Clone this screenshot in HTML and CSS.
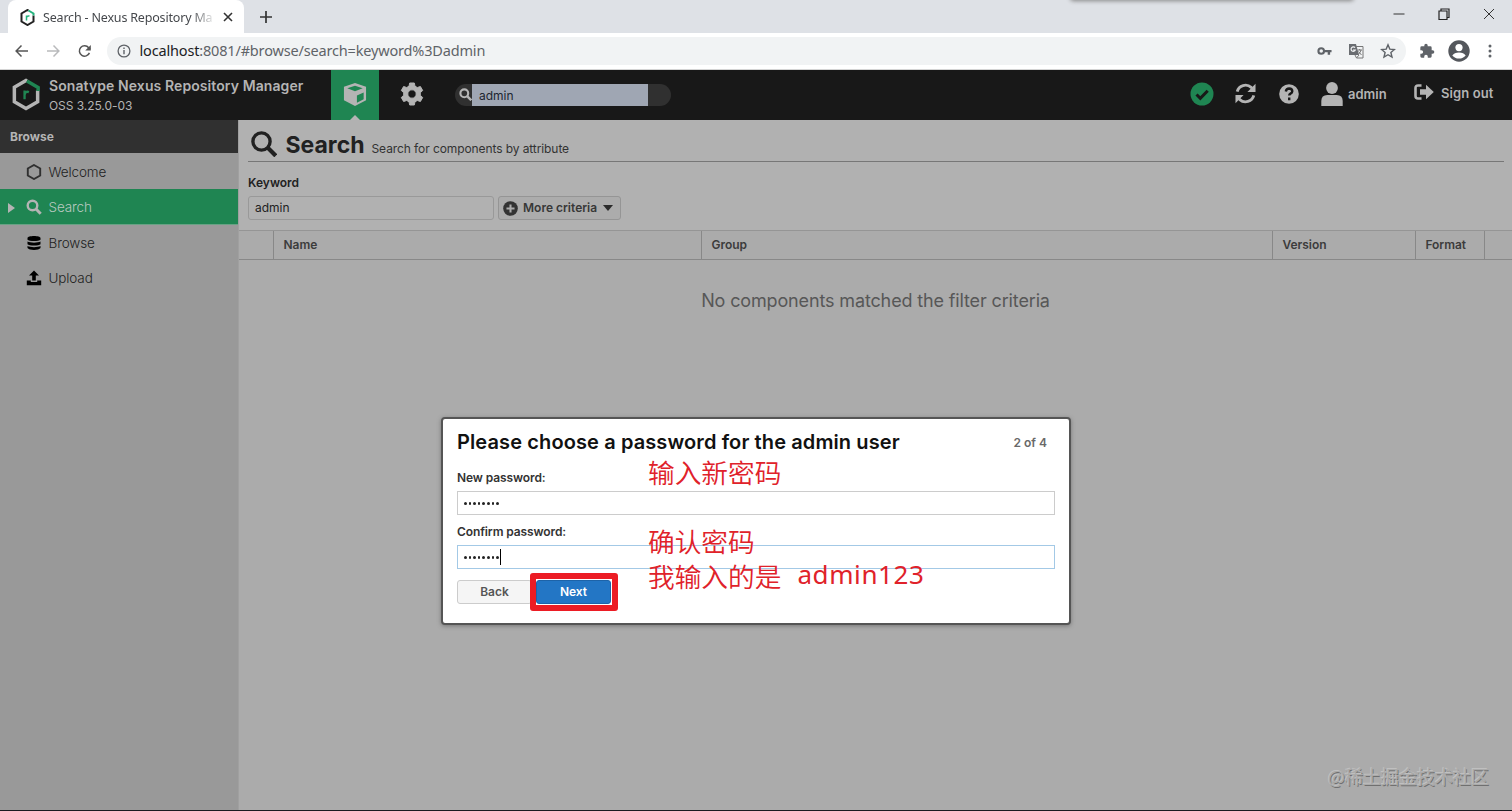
FILE: index.html
```html
<!DOCTYPE html>
<html lang="en">
<head>
<meta charset="utf-8">
<title>Search - Nexus Repository Manager</title>
<link rel="stylesheet" href="styles.css">
</head>
<body>
<div class="window">
  <div class="tabstrip">
    <div class="tab">
      <svg class="favicon" viewBox="0 0 30 34"><path d="M17 3 15 2 3 9v16l12 7 12-7V13" fill="none" stroke="#222" stroke-width="4"/><path d="M17 3l10 6v4" fill="none" stroke="#24b47e" stroke-width="4"/><path d="M13 23V13m0 4q1-4 6-3" fill="none" stroke="#24b47e" stroke-width="3"/></svg>
      <span class="tab-title">Search - Nexus Repository Ma</span>
      <svg class="tab-close" viewBox="0 0 10 10"><path d="M1 1l8 8M9 1L1 9" stroke="#333" stroke-width="1.6"/></svg>
    </div>
    <svg class="tab-new" viewBox="0 0 12 12"><path d="M6 0v12M0 6h12" stroke="#333" stroke-width="1.7"/></svg>
    <div class="shadow-edge"></div>
    <div class="win-controls">
      <svg viewBox="0 0 12 12"><path d="M.5 6h11" stroke="#333"/></svg>
      <svg viewBox="0 0 12 12"><path d="M1 3h8v8.500H1zM3 3V1h8v8.500H9" fill="none" stroke="#222" stroke-width="1.200"/></svg>
      <svg viewBox="0 0 12 12"><path d="M1 1l10 10M11 1L1 11" stroke="#333"/></svg>
    </div>
  </div>
  <div class="toolbar">
    <svg class="nav" viewBox="0 0 14 14"><path d="M14 7H1.500M7 1L1.200 7 7 13" fill="none" stroke="#555" stroke-width="1.600"/></svg>
    <svg class="nav" viewBox="0 0 14 14"><path d="M0 7h12.500M7 1l5.800 6L7 13" fill="none" stroke="#b9babc" stroke-width="1.600"/></svg>
    <svg class="nav" viewBox="0 0 14 14"><path d="M12.300 9A5.600 5.600 0 1 1 11.500 3.500L13 5" fill="none" stroke="#555" stroke-width="1.600"/><path d="M13.800.5v6H7.800z" fill="#555"/></svg>
    <div class="omnibox">
      <svg class="info" viewBox="0 0 14 14"><circle cx="7" cy="7" r="5.900" fill="none" stroke="#5f6368" stroke-width="1.300"/><path d="M7 6v4.300M7 3.500V5" stroke="#5f6368" stroke-width="1.400"/></svg>
      <span class="url"><b>localhost</b>:8081/#browse/search=keyword%3Dadmin</span>
      <svg class="i-key" viewBox="0 0 16 10"><circle cx="4.500" cy="5" r="3" fill="none" stroke="#5f6368" stroke-width="2.200"/><path d="M8 3.800h7.500v2.500H14V9h-2.600V6.300H8z" fill="#5f6368"/></svg>
      <svg class="i-tr" viewBox="0 0 16 16"><path d="M1 1h7l3 11H1z" fill="#6a6d71"/><path d="M8 3.500h7v11.500H8.500L7 12M11 12l-2.500 3" fill="none" stroke="#777" stroke-width="1"/><path d="M7 4.700a2.200 2.200 0 1 0 .3 2.300H5" fill="none" stroke="#f1f3f4" stroke-width="1.200"/><path d="M9.500 7h4.500M11.700 6v1M13 7q-.5 3-3 4.500M10.500 8.500l3 3.500" fill="none" stroke="#777"/></svg>
      <svg class="i-star" viewBox="0 0 16 16"><path d="M8 1.800l1.800 4.300 4.600.4-3.500 3 1.100 4.600L8 11.700l-4 2.400 1.100-4.600-3.500-3 4.600-.4z" fill="none" stroke="#5f6368" stroke-width="1.400"/></svg>
    </div>
    <svg class="i-puzzle" viewBox="0 0 24 24"><path fill="#5f6368" d="M20.500 11H19V7a2 2 0 0 0-2-2h-4V3.500a2.500 2.500 0 0 0-5 0V5H4a2 2 0 0 0-2 2v3.800h1.500a2.700 2.700 0 0 1 0 5.400H2V20a2 2 0 0 0 2 2h3.800v-1.500a2.700 2.700 0 0 1 5.400 0V22H17a2 2 0 0 0 2-2v-4h1.500a2.500 2.500 0 0 0 0-5z"/></svg>
    <svg class="i-profile" viewBox="0 0 22 22"><circle cx="11" cy="11" r="10.700" fill="#54575c"/><circle cx="11" cy="7.600" r="3.600" fill="#fff"/><path d="M4.300 15.500q2-3.100 6.700-3.100t6.700 3.100q-2.500 3.100-6.700 3.100t-6.700-3.100z" fill="#fff"/></svg>
    <svg class="i-dots" viewBox="0 0 4 14"><circle cx="2" cy="2" r="1.500" fill="#5f6368"/><circle cx="2" cy="7" r="1.500" fill="#5f6368"/><circle cx="2" cy="12" r="1.500" fill="#5f6368"/></svg>
  </div>

  <div class="app-header">
    <svg class="logo" viewBox="0 0 30 34"><path d="M16 3 15 2.500 3 9.500v15l12 7 12-7V13" fill="none" stroke="#b4b4b4" stroke-width="3.600"/><path d="M16 3l11.500 6.800v3.500" fill="none" stroke="#1f8552" stroke-width="3.600"/><path d="M13.500 22V13m0 4.500q1-4.500 4.500-3" fill="none" stroke="#1f8552" stroke-width="2.400"/></svg>
    <div class="brand"><div class="brand-name">Sonatype Nexus Repository Manager</div><div class="brand-version">OSS 3.25.0-03</div></div>
    <div class="mode active"><svg viewBox="0 0 26 26"><path d="M13 1l11.500 4v14L13 25 1.500 19V5z" fill="#b4b4b4"/><path d="M13 4l8 2.500L13 9.500 5 6.500zM15 14l7-3v7l-7 3.700z" fill="#1f8552"/></svg></div>
    <div class="mode gear"><svg viewBox="0 0 24 24"><path fill="#b4b4b4" stroke="#b4b4b4" stroke-width="1" stroke-linejoin="round" fill-rule="evenodd" d="M9.700 1h4.600l.7 3.200 2.300 1.300 3.100-1 2.300 4-2.400 2.200v2.600l2.400 2.200-2.300 4-3.100-1-2.300 1.300-.7 3.200H9.700L9 19.800l-2.300-1.300-3.100 1-2.300-4 2.400-2.200v-2.600L1.300 8.500l2.300-4 3.100 1L9 4.200zM12 7.800a4.200 4.200 0 1 0 0 8.400 4.200 4.200 0 0 0 0-8.400z"/></svg></div>
    <div class="quick-search">
      <svg viewBox="0 0 14 14"><circle cx="5.700" cy="5.700" r="4.200" fill="none" stroke="#b4b4b4" stroke-width="2.300"/><path d="M8.800 8.800l4.400 4.400" stroke="#b4b4b4" stroke-width="2.700"/></svg>
      <div class="quick-input">admin</div>
    </div>
    <div class="header-actions">
      <svg class="a-check" viewBox="0 0 24 24"><circle cx="12" cy="12" r="11.500" fill="#1f8552"/><path d="M6.500 12.500l3.800 3.800 7.400-7.600" fill="none" stroke="#181818" stroke-width="3"/></svg>
      <svg class="a-refresh" viewBox="0 0 22 22"><path d="M2.300 9A9 9 0 0 1 17 4.600L19 7M19.700 13A9 9 0 0 1 5 17.400L3 15" fill="none" stroke="#b4b4b4" stroke-width="3"/><path d="M21.500.8v8.500H13zM.5 21.200v-8.500H9z" fill="#b4b4b4"/></svg>
      <svg class="a-help" viewBox="0 0 20 20"><circle cx="10" cy="10" r="9.800" fill="#b4b4b4"/><path d="M6.800 7.500q.5-3 3.400-3 3 .1 3.100 2.700 0 1.500-1.800 2.400-1.300.7-1.300 2M10.200 13.600v2.600" fill="none" stroke="#181818" stroke-width="2.400"/></svg>
      <svg class="a-user" viewBox="0 0 22 24"><circle cx="11" cy="6" r="5.900" fill="#b4b4b4"/><path d="M.3 24v-5q0-6 6-6h9.400q6 0 6 6v5z" fill="#b4b4b4"/></svg>
      <span class="a-name">admin</span>
      <svg class="a-out" viewBox="0 0 20 16"><path d="M7.500 1.500H4Q1.500 1.500 1.500 4v8q0 2.500 2.500 2.500h3.500" fill="none" stroke="#b4b4b4" stroke-width="2.600"/><path d="M6 5.300h6V.8L19.800 8 12 15.200v-4.500H6z" fill="#b4b4b4"/></svg>
      <span class="a-signout">Sign out</span>
    </div>
  </div>

  <div class="body">
    <div class="sidebar">
      <div class="side-title">Browse</div>
      <div class="side-item welcome"><svg viewBox="0 0 16 16"><path d="M8 1l6.200 3.500v7L8 15l-6.200-3.500v-7z" fill="none" stroke="#303030" stroke-width="1.900"/></svg><span>Welcome</span></div>
      <div class="side-item selected"><i class="caret"></i><svg viewBox="0 0 16 16"><circle cx="6.500" cy="6.500" r="4.800" fill="none" stroke="#b4b4b4" stroke-width="2.400"/><path d="M10 10l4.700 4.700" stroke="#b4b4b4" stroke-width="3"/></svg><span>Search</span></div>
      <div class="side-item"><svg viewBox="0 0 16 16"><path d="M1.500 3.200C1.500.4 14.500.4 14.500 3.200v1.500C13 6.500 3 6.500 1.500 4.700zM1.500 6.500C4 8 12 8 14.500 6.500v2.700C13 11 3 11 1.500 9.200zM1.500 11C4 12.500 12 12.500 14.500 11v2c-1.500 2.600-11.500 2.600-13 0z"/></svg><span>Browse</span></div>
      <div class="side-item"><svg viewBox="0 0 16 16"><path d="M8 .5l5 5H9.800v5H6.200v-5H3zM.8 10.500h4v1.500h6.400v-1.500h4v4.700H.8z"/></svg><span>Upload</span></div>
    </div>
    <div class="content">
      <div class="page-head">
        <svg viewBox="0 0 26 26"><circle cx="10.500" cy="10.500" r="8.600" fill="none" stroke="#212121" stroke-width="3.400"/><path d="M16.800 16.800l8 8" stroke="#212121" stroke-width="4.200"/></svg>
        <h1>Search</h1><span class="subtitle">Search for components by attribute</span>
      </div>
      <div class="criteria">
        <label class="kw">Keyword</label>
        <div class="criteria-row">
          <div class="field"><span>admin</span></div>
          <div class="more"><svg viewBox="0 0 16 16"><circle cx="8" cy="8" r="7.800" fill="#333"/><path d="M8 3.700v8.600M3.700 8h8.600" stroke="#acacac" stroke-width="2.200"/></svg><span>More criteria</span><i></i></div>
        </div>
      </div>
      <div class="grid-head"><div></div><div>Name</div><div>Group</div><div>Version</div><div>Format</div><div></div></div>
      <div class="empty"><span>No components matched the filter criteria</span></div>
    </div>
  </div>

  <div class="dialog">
    <div class="dialog-head"><h2>Please choose a password for the admin user</h2><span class="step">2 of 4</span></div>
    <label class="l-new">New password:</label>
    <div class="pw"><i></i><i></i><i></i><i></i><i></i><i></i><i></i><i></i></div>
    <label class="l-conf">Confirm password:</label>
    <div class="pw focused"><i></i><i></i><i></i><i></i><i></i><i></i><i></i><i></i><b></b></div>
    <div class="buttons"><div class="btn back"><span>Back</span></div><div class="btn next"><span>Next</span></div></div>
    <div class="mark"></div>
  </div>
  <div class="note n1">输入新密码</div>
  <div class="note n2">确认密码</div>
  <div class="note n3"><span>我输入的是</span><span class="latin">admin123</span></div>
  <div class="watermark">@稀土掘金技术社区</div>
</div>
</body>
</html>
```
FILE: styles.css
```css
* { box-sizing: border-box; }
body { margin: 0; font-family: Inter, "Open Sans", sans-serif; }
svg { display: block; flex: none; }
.window { position: relative; width: 1512px; height: 811px; overflow: hidden; display: flex; flex-direction: column; background: #ababab; border-bottom: 1px solid #1c1c20; white-space: nowrap; }

.tabstrip { position: relative; display: flex; align-items: center; height: 33px; background: #dee1e6; padding-left: 8px; }
.tab { display: flex; align-items: center; width: 236px; height: 33px; background: #fff; border-radius: 8px 8px 0 0; padding: 1px 0 0 12px; }
.favicon { width: 15px; height: 17px; }
.tab-title { width: 171px; margin-left: 8px; font: 12.500px "Noto Sans", sans-serif; letter-spacing: -.18px; color: #45484c; -webkit-mask-image: linear-gradient(90deg, #000 148px, transparent 173px); }
.tab-close { width: 10px; height: 10px; margin-left: 9px; }
.tab-new { width: 12px; height: 12px; margin-left: 16px; }
.shadow-edge { position: absolute; left: 1071px; top: -6px; width: 282px; height: 6px; border-radius: 3px; box-shadow: 0 0 4px 1px #888; }
.win-controls { display: flex; gap: 33px; margin: -5px 17px 0 auto; }
.win-controls svg { width: 12px; height: 12px; }

.toolbar { display: flex; align-items: center; height: 37px; background: #fff; border-bottom: 1px solid #d4d4d4; padding-left: 15px; }
.nav { width: 13px; height: 14px; margin-right: 18.500px; }
.omnibox { display: flex; align-items: center; width: 1299px; height: 28px; margin-left: -3px; border-radius: 14px; background: #f1f3f4; padding-left: 10px; }
.info { width: 14px; height: 14px; }
.url { margin: -2px 0 0 9px; font: 14.500px "Noto Sans", sans-serif; letter-spacing: -.17px; color: #5f6368; flex: 1; }
.url b { font-weight: 400; color: #202124; }
.i-key { width: 15px; height: 10px; margin-right: 16px; }
.i-tr { width: 16px; height: 16px; margin-right: 16px; }
.i-star { width: 16px; height: 16px; margin-right: 10px; }
.i-puzzle { width: 16px; height: 16px; margin-left: 13px; }
.i-profile { width: 22px; height: 22px; margin-left: 13px; }
.i-dots { width: 4px; height: 14px; margin-left: 18px; }

.app-header { display: flex; align-items: center; height: 50px; background: #181818; color: #b4b4b4; padding-left: 11px; }
.logo { width: 30px; height: 33px; margin-top: -1px; }
.brand { width: 282px; margin-left: 8px; }
.brand-name { font-size: 14px; font-weight: 600; line-height: 20px; letter-spacing: .09px; }
.brand-version { font-size: 12px; line-height: 18px; letter-spacing: -.06px; padding-top: 1px; }
.mode { position: relative; width: 48px; height: 50px; display: flex; align-items: center; justify-content: center; padding-bottom: 2px; }
.mode svg { width: 26px; height: 25px; }
.mode.active { background: #1f8552; }
.mode.active::after { content: ""; position: absolute; left: 19px; bottom: 0; border: 5px solid transparent; border-top: 0; border-bottom-color: #b4b4b4; }
.gear { margin-left: 9px; }
.mode.gear svg { width: 24px; height: 24px; }
.quick-search { display: flex; align-items: center; width: 216px; height: 22px; margin: -1px 0 0 19px; border-radius: 11px; background: #303030; padding-left: 4px; }
.quick-search svg { width: 13px; height: 13px; }
.quick-input { width: 176px; height: 22px; line-height: 23px; background: #9fa6b3; color: #202530; font-size: 12px; padding-left: 7px; }
.header-actions { display: flex; align-items: center; margin: -3px 18px 0 auto; font-size: 13px; font-weight: 600; }
.a-check { width: 24px; height: 24px; }
.a-refresh { width: 21px; height: 21px; margin-left: 21px; }
.a-help { width: 20px; height: 20px; margin-left: 22.500px; }
.a-user { width: 22px; height: 24px; margin-left: 22.500px; }
.a-name { width: 39px; margin-left: 5px; }
.a-out { width: 20px; height: 16px; margin-left: 27px; margin-bottom: 3px; }
.a-signout { width: 53px; margin-left: 7px; margin-top: -1px; letter-spacing: .1px; }

.body { display: flex; flex: 1; }
.sidebar { width: 239px; background: #999; border-right: 1px solid #a0a0a0; }
.side-title { height: 33px; background: #303030; color: #b4b4b4; font-size: 12px; font-weight: 700; line-height: 34px; padding-left: 10px; }
.side-item { position: relative; display: flex; align-items: center; height: 35px; padding: 0 0 0 26px; font-size: 13.500px; font-weight: 300; letter-spacing: -.12px; color: #222; }
.side-item.welcome { height: 36px; padding-top: 1px; }
.side-item svg { width: 16px; height: 16px; margin-right: 6.500px; }
.side-item.selected { height: 36px; background: #1f8552; color: #b9c9c0; border-bottom: 1px solid #68a284; }
.caret { position: absolute; left: 8px; top: 14px; border: 5px solid transparent; border-left: 7px solid #b4b4b4; border-right: 0; }

.content { flex: 1; display: flex; flex-direction: column; background: #ababab; }
.page-head { display: flex; align-items: baseline; height: 42px; margin: 0 8px 0 9px; padding-left: 3px; background: #b1b1b1; box-shadow: -9px 0 #b1b1b1, 8px 0 #b1b1b1; border-bottom: 1px solid #777; }
.page-head svg { width: 26px; height: 26px; align-self: flex-start; margin: 11px 8.500px 0 0; }
h1 { margin: 0; font-size: 23px; line-height: 50px; font-weight: 700; color: #212121; width: 80px; }
.subtitle { margin-left: 6px; font-size: 12px; letter-spacing: -.09px; color: #333; }
.criteria { height: 68px; background: #b1b1b1; padding: 12px 0 0 9px; }
.kw { display: block; height: 22px; line-height: 17px; font-size: 12px; font-weight: 600; color: #222; }
.criteria-row { display: flex; gap: 4px; }
.field { width: 246px; height: 24px; border: 1px solid #999; border-radius: 3px; font-size: 12px; line-height: 22px; color: #222; padding-left: 6px; }
.more { display: flex; align-items: center; width: 123px; height: 24px; border: 1px solid #959595; border-radius: 3px; background: #acacac; font-size: 12px; font-weight: 600; color: #383838; padding-left: 4px; }
.more svg { width: 15px; height: 15px; margin-right: 5px; }
.more span { width: 75px; margin-top: -1px; }
.more i { border: 5px solid transparent; border-top: 6px solid #2b2b2b; border-bottom: 0; margin-left: 5px; }
.grid-head { display: grid; grid-template-columns: 34px 428px 571px 143px 69px 28px; height: 30px; border-top: 1px solid #959595; border-bottom: 1px solid #888; font-size: 12px; font-weight: 600; letter-spacing: -.05px; color: #3c3c3c; line-height: 28px; }
.grid-head div { padding-left: 9.500px; border-left: 1px solid #888; }
.grid-head div:first-child { border: 0; }
.empty { padding-top: 30px; text-align: center; font-size: 18px; letter-spacing: -.14px; line-height: 22px; color: #575757; }

.dialog { position: absolute; left: 441px; top: 417px; width: 630px; height: 208px; border: 2px solid #555; border-radius: 4px; background: #fff; box-shadow: 0 1px 4px #777; padding: 10px 14px; }
.dialog-head { display: flex; align-items: center; justify-content: space-between; height: 26px; padding-right: 8px; }
h2 { margin: 0; font-size: 20px; font-weight: 600; letter-spacing: .11px; color: #111; }
.step { font-size: 12px; font-weight: 600; color: #696969; }
.dialog label { display: block; font-size: 12px; font-weight: 600; letter-spacing: -.1px; color: #333; line-height: 18px; }
.dialog .l-new { margin: 14px 0 4px; }
.dialog .l-conf { margin: 8px 0 4px; }
.pw { display: flex; align-items: center; gap: 2px; height: 24px; border: 1px solid #ccc; padding-left: 6px; }
.pw i { width: 2.600px; height: 2.600px; border-radius: 2px; background: #222; margin-top: 1px; }
.pw b { width: 1px; height: 16px; background: #000; margin-left: -1px; }
.focused { border-color: #a3c9e6; }
.buttons { display: flex; gap: 4px; margin-top: 11px; }
.btn { width: 75px; height: 24px; border-radius: 3px; text-align: center; font-size: 12px; line-height: 22px; font-weight: 600; }
.back { border: 1px solid #ccc; background: #f5f5f5; color: #555; }
.next { background: #2376c5; border: 1px solid #1d63a8; color: #fff; }
.mark { position: absolute; left: 87px; top: 154px; width: 88px; height: 38px; border: 6px solid #ec1c24; border-radius: 3px; }
.note { position: absolute; left: 648px; font: 26.700px/30px "Noto Sans CJK SC", sans-serif; font-weight: 350; color: #e0222a; }
.n1 { top: 457px; }
.n2 { top: 526px; }
.n3 { top: 561px; display: flex; gap: 16px; }
.latin { font: 400 26px/26px "Noto Sans", sans-serif; letter-spacing: .6px; }
.watermark { position: absolute; left: 1328px; top: 763px; font: 18px/26px "Noto Sans CJK SC", sans-serif; color: #aaa; text-shadow: -1px -1px #c0c0c0, .7px .7px #707070; }
```
